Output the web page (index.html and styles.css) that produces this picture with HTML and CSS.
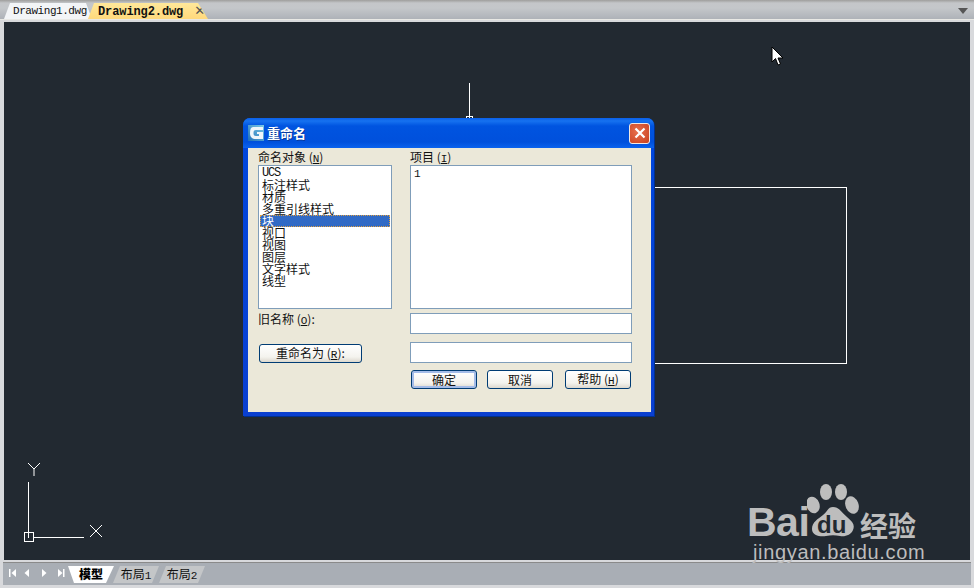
FILE: index.html
```html
<!DOCTYPE html>
<html lang="zh">
<head>
<meta charset="utf-8">
<title>重命名</title>
<link rel="stylesheet" href="styles.css">
</head>
<body>
<div class="app">
  <header class="doc-tabs">
    <div class="doc-tab">Drawing1.dwg</div>
    <div class="doc-tab active">Drawing2.dwg<span class="doc-close">✕</span></div>
    <svg class="doc-menu" width="10" height="6" viewBox="0 0 10 6"><path d="M0 0h10L5 6z" fill="#555"/></svg>
  </header>
  <main class="canvas">
    <div class="line-v"></div>
    <div class="grip"></div>
    <div class="rect"></div>
    <svg class="ucs" width="90" height="84" viewBox="0 0 90 84" fill="none" stroke="#fff">
      <path d="M9.500 19V75M14 74.500H65"/>
      <rect x="5.500" y="69.500" width="9" height="9"/>
      <path d="M9 0l6 6 6-6M15 6v7"/>
      <path d="M71 62l12 12M83 62L71 74"/>
    </svg>
    <svg class="cursor" width="13" height="21" viewBox="0 0 13 21"><path d="M1 1v15l3.500-3.500L7 19l2.500-1-2.500-6h5z" fill="#fff" stroke="#000" stroke-width="1"/></svg>

    <section class="dialog">
      <div class="titlebar">
        <svg class="app-icon" width="16" height="16" viewBox="0 0 16 16">
          <defs><linearGradient id="icon-fill" x1="0" y1="1" x2="1" y2="0"><stop offset="0" stop-color="#1f6fb8"/><stop offset="1" stop-color="#7ccbe8"/></linearGradient></defs>
          <rect width="16" height="16" fill="url(#icon-fill)"/>
          <path d="M5 2h10v3H8C6 5 5.500 6 5.500 8S6 11 8 11h3V9H9V7h6v7H8C4 14 2 12 2 8s1-6 3-6z" fill="#eef6fb"/>
        </svg>
        <span class="title">重命名</span>
        <button class="close" type="button" aria-label="关闭"><svg width="12" height="12" viewBox="0 0 12 12"><path d="M1.500 1.500l9 9M10.500 1.500l-9 9" stroke="#fff" stroke-width="2.200"/></svg></button>
      </div>
      <div class="client">
        <div class="col-left">
          <div class="label">命名对象 (<u>N</u>)</div>
          <ul class="list names">
            <li class="latin">UCS</li>
            <li>标注样式</li>
            <li>材质</li>
            <li>多重引线样式</li>
            <li class="selected">块</li>
            <li>视口</li>
            <li>视图</li>
            <li>图层</li>
            <li>文字样式</li>
            <li>线型</li>
          </ul>
          <div class="label old-label">旧名称 (<u>O</u>):</div>
          <button class="btn rename" type="button">重命名为 (<u>R</u>):</button>
        </div>
        <div class="col-right">
          <div class="label">项目 (<u>I</u>)</div>
          <ul class="list items"><li>1</li></ul>
          <div class="field old-field"></div>
          <div class="field new-field"></div>
          <div class="actions">
            <button class="btn default" type="button">确定</button>
            <button class="btn" type="button">取消</button>
            <button class="btn help" type="button">帮助 (<u>H</u>)</button>
          </div>
        </div>
      </div>
    </section>

    <div class="watermark">
      <div class="wm-top">
        <span class="wm-bai">Bai</span>
        <svg class="wm-paw" width="54" height="56" viewBox="0 0 54 56" fill="#bdbdbd">
          <ellipse cx="6" cy="21" rx="6.500" ry="8.500" transform="rotate(-20 6 21)"/>
          <ellipse cx="19" cy="8" rx="6" ry="8"/>
          <ellipse cx="34" cy="8" rx="6" ry="8"/>
          <ellipse cx="45" cy="21" rx="6.500" ry="9" transform="rotate(-20 45 21)"/>
          <path d="M26 23c6 0 8 5 14 10s8 8 6 13-8 7-13 6-9-1-14 0-14 0-14-7 6-10 11-14 5-8 10-8z"/>
        </svg>
        <span class="wm-du">du</span>
        <span class="wm-cn">经验</span>
      </div>
      <div class="wm-url">jingyan.baidu.com</div>
    </div>
  </main>
  <footer class="layout-bar">
    <div class="nav">
      <svg width="56" height="10" viewBox="0 0 56 10" fill="#fff"><path d="M0 1h1.500v8H0zM7 1v8L2.500 5zM20 1v8l-4.500-4zM33 1v8l4.500-4zM49 1v8l4.500-4zM54 1h1.500v8H54z"/></svg>
    </div>
    <div class="tab current">模型</div>
    <div class="tab">布局<span class="num">1</span></div>
    <div class="tab">布局<span class="num">2</span></div>
  </footer>
</div>
</body>
</html>
```
FILE: styles.css
```css
* { box-sizing: border-box; }
html, body { margin: 0; padding: 0; }
body { width: 974px; height: 588px; overflow: hidden; background: #fff; font-family: "Noto Sans CJK SC", "Liberation Sans", sans-serif; }
.app { width: 974px; height: 588px; display: flex; flex-direction: column; background: #d8d9dc; }

.doc-tabs { height: 20px; flex: none; display: flex; align-items: flex-end; padding-left: 4px; position: relative; background: linear-gradient(#9e9e9c 0, #c4c6c9 3px, #c4c7ca 8px, #aeb2b8 19px); border-bottom: 1px solid #e8e8e4; }
.doc-tab { height: 16px; width: 87px; padding: 1px 0 0 9px; font: 11px/15px "Liberation Mono", monospace; letter-spacing: -0.45px; color: #111; background: #f3f5f7; clip-path: polygon(6px 0, 82px 0, 88px 100%, 0 100%); white-space: nowrap; }
.doc-tab.active { width: 120px; margin-left: -3px; padding-left: 10px; font-size: 12px; letter-spacing: -0.1px; font-weight: 700; background: linear-gradient(#ffe89a, #ffd97c); clip-path: polygon(6px 0, 110px 0, 120px 100%, 0 100%); }
.doc-close { margin-left: 11px; font: 13px/14px "DejaVu Sans", sans-serif; color: #555; letter-spacing: 0; }
.doc-menu { position: absolute; right: 6px; top: 8px; }

.canvas { position: relative; flex: none; height: 538px; margin: 2px 4px 0 4px; background: #222931; }
.line-v { position: absolute; left: 465px; top: 61px; width: 1px; height: 36px; background: #fff; }
.grip { position: absolute; left: 462px; top: 94px; width: 7px; height: 6px; border: 1px solid #fff; }
.rect { position: absolute; left: 600px; top: 165px; width: 243px; height: 177px; border: 1px solid #fff; }
.ucs { position: absolute; left: 15px; top: 441px; }
.cursor { position: absolute; left: 767px; top: 24px; }

.dialog { position: absolute; left: 239px; top: 96px; width: 411px; height: 298px; padding: 0 3px 4px 5px; display: flex; flex-direction: column; background: linear-gradient(#0a5be8, #0046dc 20px, #0a3fd0); border-radius: 7px 7px 0 0; box-shadow: 1px 1px 0 #00308f; }
.titlebar { height: 30px; flex: none; display: flex; align-items: center; background: linear-gradient(#0a5ee8 0, #1672f0 3px, #0054e0 8px, #0050dc 24px, #0a62ee 30px); margin: 0 -3px 0 -5px; padding: 0 3px 0 5px; border-radius: 7px 7px 0 0; }
.app-icon { margin-right: 3px; }
.title { font-size: 13px; font-weight: 700; color: #fff; line-height: 16px; text-shadow: 1px 1px 0 #0a3a9c; }
.close { margin-left: auto; margin-right: 1px; width: 21px; height: 21px; padding: 0; border: 1px solid #f0e8e4; border-radius: 3px; background: radial-gradient(circle at 40% 40%, #e8704e, #c8401e); display: flex; align-items: center; justify-content: center; }

.client { flex: 1; display: flex; gap: 18px; padding: 2px 0 0 10px; background: #ebe8d9; }
.col-left { width: 134px; display: flex; flex-direction: column; }
.col-right { width: 222px; display: flex; flex-direction: column; }
.label { height: 15px; font-size: 12px; line-height: 13px; color: #111; white-space: nowrap; }
.label u { font-family: "Liberation Mono", monospace; font-size: 11px; }
.list { margin: 0; padding: 1px 0 0 3px; list-style: none; height: 144px; background: #fff; border: 1px solid #7f9db9; font-size: 12px; line-height: 12px; color: #111; }
.list li { height: 12px; white-space: nowrap; }
.names li.latin { font: 12px/12px "Liberation Mono", monospace; letter-spacing: -1.2px; }
.names li.selected { margin: 0 1px 0 -2px; padding-left: 2px; background: #316ac5; color: #fff; outline: 1px dotted #e0a040; outline-offset: -1px; }
.items { padding-top: 2px; font: 11px/12px "Liberation Mono", monospace; }
.old-label { margin-top: 3px; }
.btn { height: 19px; width: 66px; padding: 0; font: 12px/15px "Noto Sans CJK SC", sans-serif; color: #111; border: 1px solid #003c74; border-radius: 3px; background: linear-gradient(#fff, #f4f3ee 70%, #dcd8ce); white-space: nowrap; }
.btn u { font-family: "Liberation Mono", monospace; font-size: 11px; }
.btn.rename { margin: 17px 0 0 1px; width: 103px; }
.field { width: 222px; height: 21px; background: #fff; border: 1px solid #7f9db9; }
.old-field { margin-top: 4px; }
.new-field { margin-top: 8px; }
.actions { display: flex; margin-top: 7px; padding-left: 1px; }
.actions .btn + .btn { margin-left: 10px; }
.actions .btn.help { margin-left: 12px; }
.btn.default { box-shadow: inset 0 0 0 2px #a4bce8; }

.watermark { position: absolute; left: 743px; top: 462px; width: 190px; color: #bdbdbd; }
.wm-top { position: relative; height: 58px; }
.wm-bai { position: absolute; left: 0; top: 16px; font: 700 41px/44px "Liberation Sans", sans-serif; letter-spacing: -0.5px; }
.wm-paw { position: absolute; left: 60px; top: 0; }
.wm-du { position: absolute; left: 70px; top: 29px; font: 700 24px/24px "Liberation Sans", sans-serif; color: #222931; }
.wm-cn { position: absolute; left: 113px; top: 24px; font-size: 28px; line-height: 34px; font-weight: 700; letter-spacing: 0; white-space: nowrap; }
.wm-url { margin: -1px 0 0 6px; font: 20px/22px "Liberation Sans", sans-serif; letter-spacing: 0.65px; white-space: nowrap; }

.layout-bar { flex: none; height: 23px; margin: 2px 3px 3px 3px; display: flex; align-items: flex-end; background: #a9aeb5; border-top: 1px solid #8a8a8a; }
.nav { width: 65px; height: 22px; padding: 5px 0 0 6px; flex: none; display: flex; align-items: flex-start; }
.tab { height: 17px; width: 46px; margin-bottom: 2px; text-align: center; font-size: 12px; line-height: 16px; color: #111; background: #c4c6c8; clip-path: polygon(0 100%, 7px 0, 46px 0, 39px 100%); }
.tab .num { font-family: "Liberation Mono", monospace; font-size: 11px; }
.tab.current { width: 46px; margin-right: -1px; font-weight: 900; color: #000; background: #fff; clip-path: polygon(0 0, 46px 0, 38px 100%, 6px 100%); }
```
